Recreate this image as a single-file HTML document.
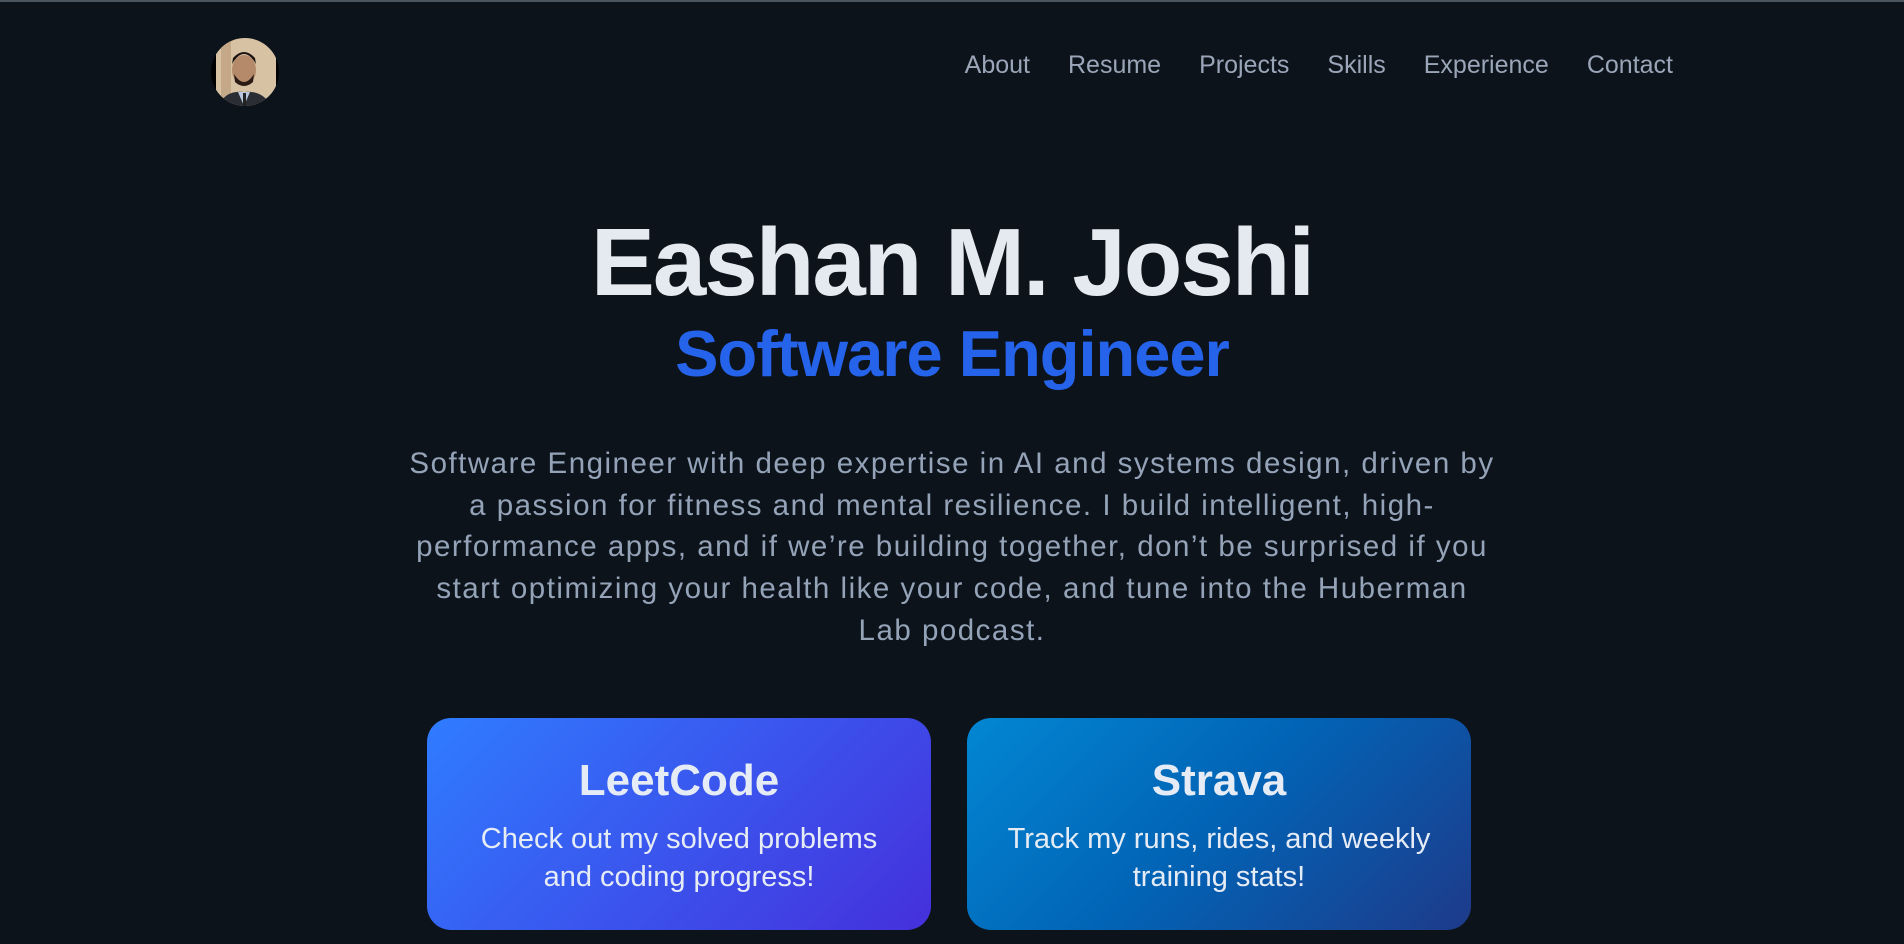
<!DOCTYPE html>
<html><head><meta charset="utf-8"><style>
*{margin:0;padding:0;box-sizing:border-box}
html,body{width:1904px;height:944px;overflow:hidden;background:#0d131b;font-family:"Liberation Sans",sans-serif}
.topline{position:absolute;top:0;left:0;width:1904px;height:2px;background:#4a5560}
.avatar{position:absolute;left:211px;top:38px;width:68px;height:68px;border-radius:50%;background:#000;overflow:hidden}
nav{position:absolute;top:51px;right:231px;display:flex;gap:38px;font-size:25px;color:#9aa6b8}
h1{position:absolute;top:208px;left:0;width:1904px;text-align:center;font-size:96px;font-weight:bold;color:#e5e9f0;letter-spacing:-2px}
h2{position:absolute;top:316px;left:0;width:1904px;text-align:center;font-size:65px;font-weight:bold;color:#2563eb;letter-spacing:-1px}
p.bio{position:absolute;top:443px;left:352px;width:1200px;text-align:center;font-size:29.5px;letter-spacing:1.5px;line-height:41.7px;color:#94a3b8;white-space:nowrap}
.card{position:absolute;top:718px;width:504px;height:212px;border-radius:24px;text-align:center;color:#e6ecf5}
.card h3{font-size:44px;margin-top:38px;font-weight:bold}
.card div{font-size:29px;line-height:38px;margin-top:14px}
</style></head><body>
<div class="topline"></div>
<div class="avatar"><svg width="68" height="68" viewBox="0 0 68 68"><rect x="5" y="0" width="60" height="68" fill="#d8c2a4"/><rect x="10" y="0" width="10" height="60" fill="#c4a888"/><ellipse cx="33" cy="32" rx="12" ry="15" fill="#b58a6a"/><path d="M21 26 Q33 6 45 26 L44 20 Q33 8 22 20Z" fill="#1c1410"/><path d="M23 36 Q33 52 43 36 L42 44 Q33 52 24 44Z" fill="#2a1c14"/><path d="M8 68 Q14 52 33 54 Q52 52 60 68Z" fill="#2a2d33"/><path d="M27 54 L33 68 L39 54Z" fill="#b8c8e0"/><rect x="32" y="55" width="3" height="13" fill="#222"/></svg></div>
<nav><span>About</span><span>Resume</span><span>Projects</span><span>Skills</span><span>Experience</span><span>Contact</span></nav>
<h1>Eashan M. Joshi</h1>
<h2>Software Engineer</h2>
<p class="bio">Software Engineer with deep expertise in AI and systems design, driven by<br>a passion for fitness and mental resilience. I build intelligent, high-<br>performance apps, and if we’re building together, don’t be surprised if you<br>start optimizing your health like your code, and tune into the Huberman<br>Lab podcast.</p>
<div class="card" style="left:427px;background:linear-gradient(135deg,#2f7cff,#4530dc)"><h3>LeetCode</h3><div>Check out my solved problems<br>and coding progress!</div></div>
<div class="card" style="left:967px;background:linear-gradient(135deg,#0287d2,#0262b4 50%,#1e3a8a)"><h3>Strava</h3><div>Track my runs, rides, and weekly<br>training stats!</div></div>
</body></html>
